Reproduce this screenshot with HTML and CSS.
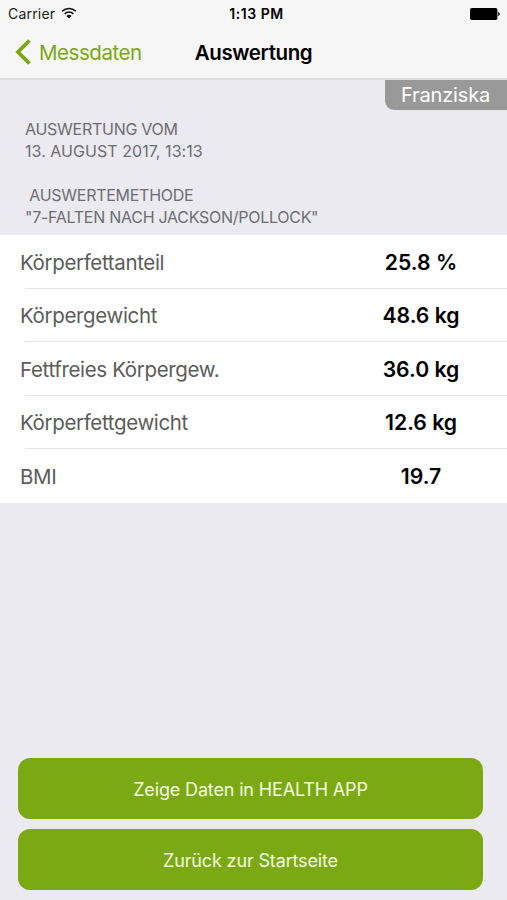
FILE: index.html
```html
<!DOCTYPE html>
<html lang="de">
<head>
<meta charset="UTF-8">
<meta name="viewport" content="width=device-width, initial-scale=1">
<title>Auswertung</title>
<link rel="stylesheet" href="styles.css">
</head>
<body>
<header class="header">
    <div class="status">
        <div class="carrier">
            <span>Carrier</span>
            <svg class="wifi" width="16" height="12" viewBox="0 0 16 12">
                <path d="M1.2 4.3a9.6 9.6 0 0 1 13.6 0M3.6 6.9a6.2 6.2 0 0 1 8.8 0" fill="none" stroke="#111" stroke-width="1.6"/>
                <path d="M8 11.6L5.4 9a3.7 3.7 0 0 1 5.2 0z" fill="#111"/>
            </svg>
        </div>
        <span class="time">1:13 PM</span>
        <svg class="battery" width="30" height="12" viewBox="0 0 30 12">
            <rect width="27.4" height="12" rx="1.8"/>
            <path d="M28.2 4q1.6.4 1.6 2t-1.6 2z"/>
        </svg>
    </div>
    <nav class="nav">
        <a class="back" href="#">
            <svg width="16" height="26" viewBox="0 0 16 26">
                <path d="M14.5 1.5L3 13L14.5 24.5" fill="none" stroke="#7aa814" stroke-width="3.8"/>
            </svg>
            <span>Messdaten</span>
        </a>
        <h1 class="title">Auswertung</h1>
    </nav>
</header>

<main class="content">
    <div class="user">Franziska</div>
    <div class="info">
        <p class="date">Auswertung vom<br><span class="date-value">13. August 2017, 13:13</span></p>
        <p class="method">&nbsp;Auswertemethode<br>"7-Falten nach Jackson/Pollock"</p>
    </div>
    <ul class="results">
        <li class="row"><span class="label">Körperfettanteil</span><span class="value">25.8 %</span></li>
        <li class="row"><span class="label">Körpergewicht</span><span class="value">48.6 kg</span></li>
        <li class="row"><span class="label">Fettfreies Körpergew.</span><span class="value">36.0 kg</span></li>
        <li class="row"><span class="label">Körperfettgewicht</span><span class="value">12.6 kg</span></li>
        <li class="row"><span class="label">BMI</span><span class="value">19.7</span></li>
    </ul>
    <div class="actions">
        <button class="button">Zeige Daten in HEALTH APP</button>
        <button class="button">Zurück zur Startseite</button>
    </div>
</main>
</body>
</html>
```
FILE: styles.css
```css
* {
    box-sizing: border-box;
}

body {
    display: flex;
    flex-direction: column;
    height: 100vh;
    margin: 0;
    background-color: #ebeaf0;
    font-family: Inter, "Liberation Sans", sans-serif;
    color: #000;
}

.header {
    height: 80px;
    background-color: #f6f6f6;
    border-bottom: 2px solid #dcdcde;
}

.status {
    display: grid;
    grid-template-columns: 1fr auto 1fr;
    align-items: center;
    height: 27px;
    padding: 0 7px 0 8px;
    font-size: 14px;
}

.carrier {
    display: flex;
    align-items: center;
    gap: 6px;
    color: #222;
    letter-spacing: 0.2px;
}

.wifi {
    margin-top: -2px;
}

.time {
    padding-left: 5px;
    font-weight: 600;
    letter-spacing: 0.55px;
}

.battery {
    justify-self: end;
}

.nav {
    display: grid;
    grid-template-columns: 1fr auto 1fr;
    align-items: center;
    height: 50px;
    padding: 0 15px;
}

.back {
    display: flex;
    align-items: center;
    gap: 8px;
    color: #7aa814;
    font-size: 20.5px;
    letter-spacing: -0.45px;
    text-decoration: none;
}

.title {
    margin: 0;
    font-size: 20.5px;
    font-weight: 600;
    letter-spacing: -0.4px;
}

.content {
    display: flex;
    flex-direction: column;
    flex: 1;
}

.user {
    align-self: flex-end;
    width: 122px;
    height: 30px;
    padding-left: 16px;
    border-bottom-left-radius: 9px;
    background-color: #999;
    color: #fff;
    font-size: 20px;
    line-height: 30px;
    letter-spacing: -0.15px;
}

.info {
    height: 125.4px;
    padding: 8px 25px 0;
    color: #6d6d72;
    font-size: 16px;
    line-height: 22px;
    letter-spacing: -0.27px;
    text-transform: uppercase;
}

.info p {
    margin: 0 0 22px;
}

.date-value {
    letter-spacing: 0.05px;
}

.results {
    margin: 0;
    padding: 0;
    list-style: none;
    background-color: #fff;
}

.row {
    display: flex;
    align-items: center;
    height: 53.5px;
    padding-left: 20px;
    background: linear-gradient(#e6e6e8, #e6e6e8) right bottom / calc(100% - 25px) 1px no-repeat;
}

.row:last-child {
    background: none;
}

.label {
    flex: 1;
    color: #5c5c5c;
    font-size: 20.5px;
    letter-spacing: -0.35px;
}

.value {
    width: 172px;
    padding-bottom: 1px;
    font-size: 21.2px;
    font-weight: 600;
    text-align: center;
}

.actions {
    display: flex;
    flex-direction: column;
    gap: 10px;
    margin-top: auto;
    padding: 0 24px 10px 18px;
}

.button {
    height: 61px;
    padding-top: 3px;
    border: none;
    border-radius: 12px;
    background-color: #7ba914;
    color: #f4ffe0;
    font-family: inherit;
    font-size: 18px;
    letter-spacing: -0.15px;
    cursor: pointer;
}
```
